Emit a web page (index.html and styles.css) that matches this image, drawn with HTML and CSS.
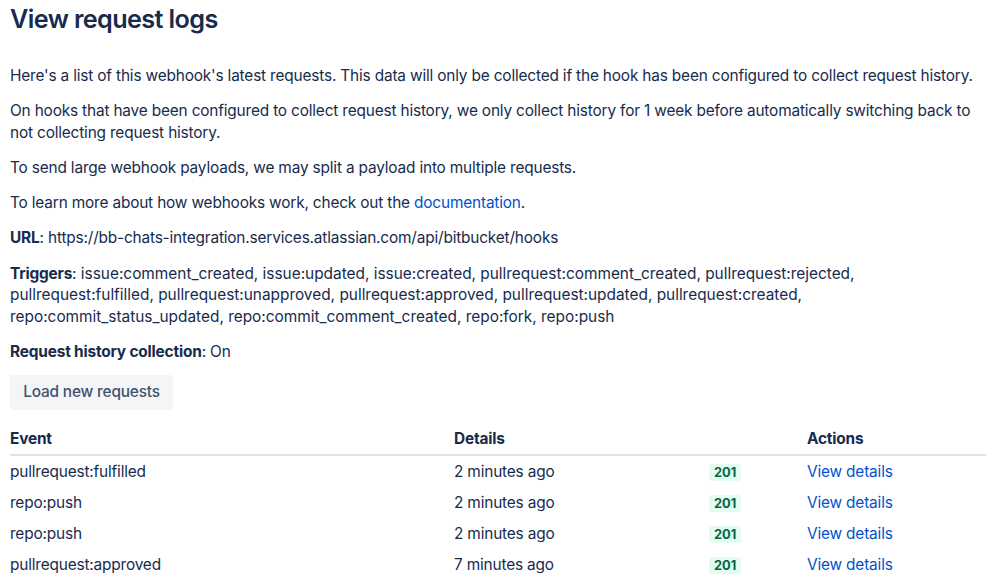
FILE: index.html
```html
<!DOCTYPE html>
<html lang="en">
<head>
<meta charset="utf-8">
<title>View request logs</title>
<link rel="stylesheet" href="styles.css">
</head>
<body>
<main class="page">
  <h1 class="title">View request logs</h1>
  <p class="intro">Here's a list of this webhook's latest requests. This data will only be collected if the hook has been configured to collect request history.</p>
  <p>On hooks that have been configured to collect request history, we only collect history for 1 week before automatically switching back to not collecting request history.</p>
  <p>To send large webhook payloads, we may split a payload into multiple requests.</p>
  <p>To learn more about how webhooks work, check out the <a class="link" href="#">documentation</a>.</p>
  <p><strong>URL</strong>: https://bb-chats-integration.services.atlassian.com/api/bitbucket/hooks</p>
  <p class="triggers"><strong>Triggers</strong>: issue:comment_created, issue:updated, issue:created, pullrequest:comment_created, pullrequest:rejected, pullrequest:fulfilled, pullrequest:unapproved, pullrequest:approved, pullrequest:updated, pullrequest:created, repo:commit_status_updated, repo:commit_comment_created, repo:fork, repo:push</p>
  <p><strong>Request history collection</strong>: On</p>
  <button class="btn" type="button">Load new requests</button>
  <table class="logs">
    <colgroup>
      <col class="c-event"><col class="c-details"><col class="c-status"><col class="c-actions">
    </colgroup>
    <thead>
      <tr><th>Event</th><th>Details</th><th></th><th>Actions</th></tr>
    </thead>
    <tbody>
      <tr><td>pullrequest:fulfilled</td><td>2 minutes ago</td><td><span class="badge">201</span></td><td><a class="link" href="#">View details</a></td></tr>
      <tr><td>repo:push</td><td>2 minutes ago</td><td><span class="badge">201</span></td><td><a class="link" href="#">View details</a></td></tr>
      <tr><td>repo:push</td><td>2 minutes ago</td><td><span class="badge">201</span></td><td><a class="link" href="#">View details</a></td></tr>
      <tr><td>pullrequest:approved</td><td>7 minutes ago</td><td><span class="badge">201</span></td><td><a class="link" href="#">View details</a></td></tr>
    </tbody>
  </table>
</main>
</body>
</html>
```
FILE: styles.css
```css
html, body {
  margin: 0;
  padding: 0;
  background: #ffffff;
}
body {
  font-family: "Inter", "Liberation Sans", sans-serif;
  font-size: 15.4px;
  line-height: 21.7px;
  letter-spacing: -0.17px;
  color: #172B4D;
}
.page {
  width: 976px;
  padding: 0 0 0 10px;
}
.title {
  margin: 4.3px 0 0;
  font-size: 25.2px;
  line-height: 30.8px;
  font-weight: 600;
  letter-spacing: -0.6px;
}
p {
  margin: 13.6px 0 0;
}
p.intro {
  margin-top: 29.5px;
}
p.triggers {
  letter-spacing: 0;
}
strong {
  font-weight: 700;
  letter-spacing: -0.17px;
}
.link {
  color: #0052CC;
  text-decoration: none;
}
.btn {
  display: block;
  margin-top: 12px;
  height: 34.7px;
  padding: 0 13.2px;
  border: 0;
  border-radius: 3px;
  background: #F4F5F7;
  color: #42526E;
  font-family: inherit;
  font-size: 15.4px;
  font-weight: 500;
  letter-spacing: -0.17px;
  line-height: 34.7px;
}
.logs {
  margin-top: 18.5px;
  width: 976px;
  border-collapse: collapse;
  table-layout: fixed;
}
.c-event { width: 444px; }
.c-details { width: 255px; }
.c-status { width: 98px; }
.c-actions { width: 179px; }
.logs th {
  text-align: left;
  font-weight: 700;
  padding: 0 0 3.5px;
  border-bottom: 2px solid #DFE1E6;
}
.logs td {
  padding: 5.6px 0 3.7px;
  vertical-align: baseline;
}
.badge {
  display: inline-block;
  padding: 0 5px;
  border-radius: 3px;
  background: #E3FCEF;
  color: #006644;
  font-size: 12.8px;
  line-height: 17px;
  font-weight: 700;
  letter-spacing: 0;
}
```
